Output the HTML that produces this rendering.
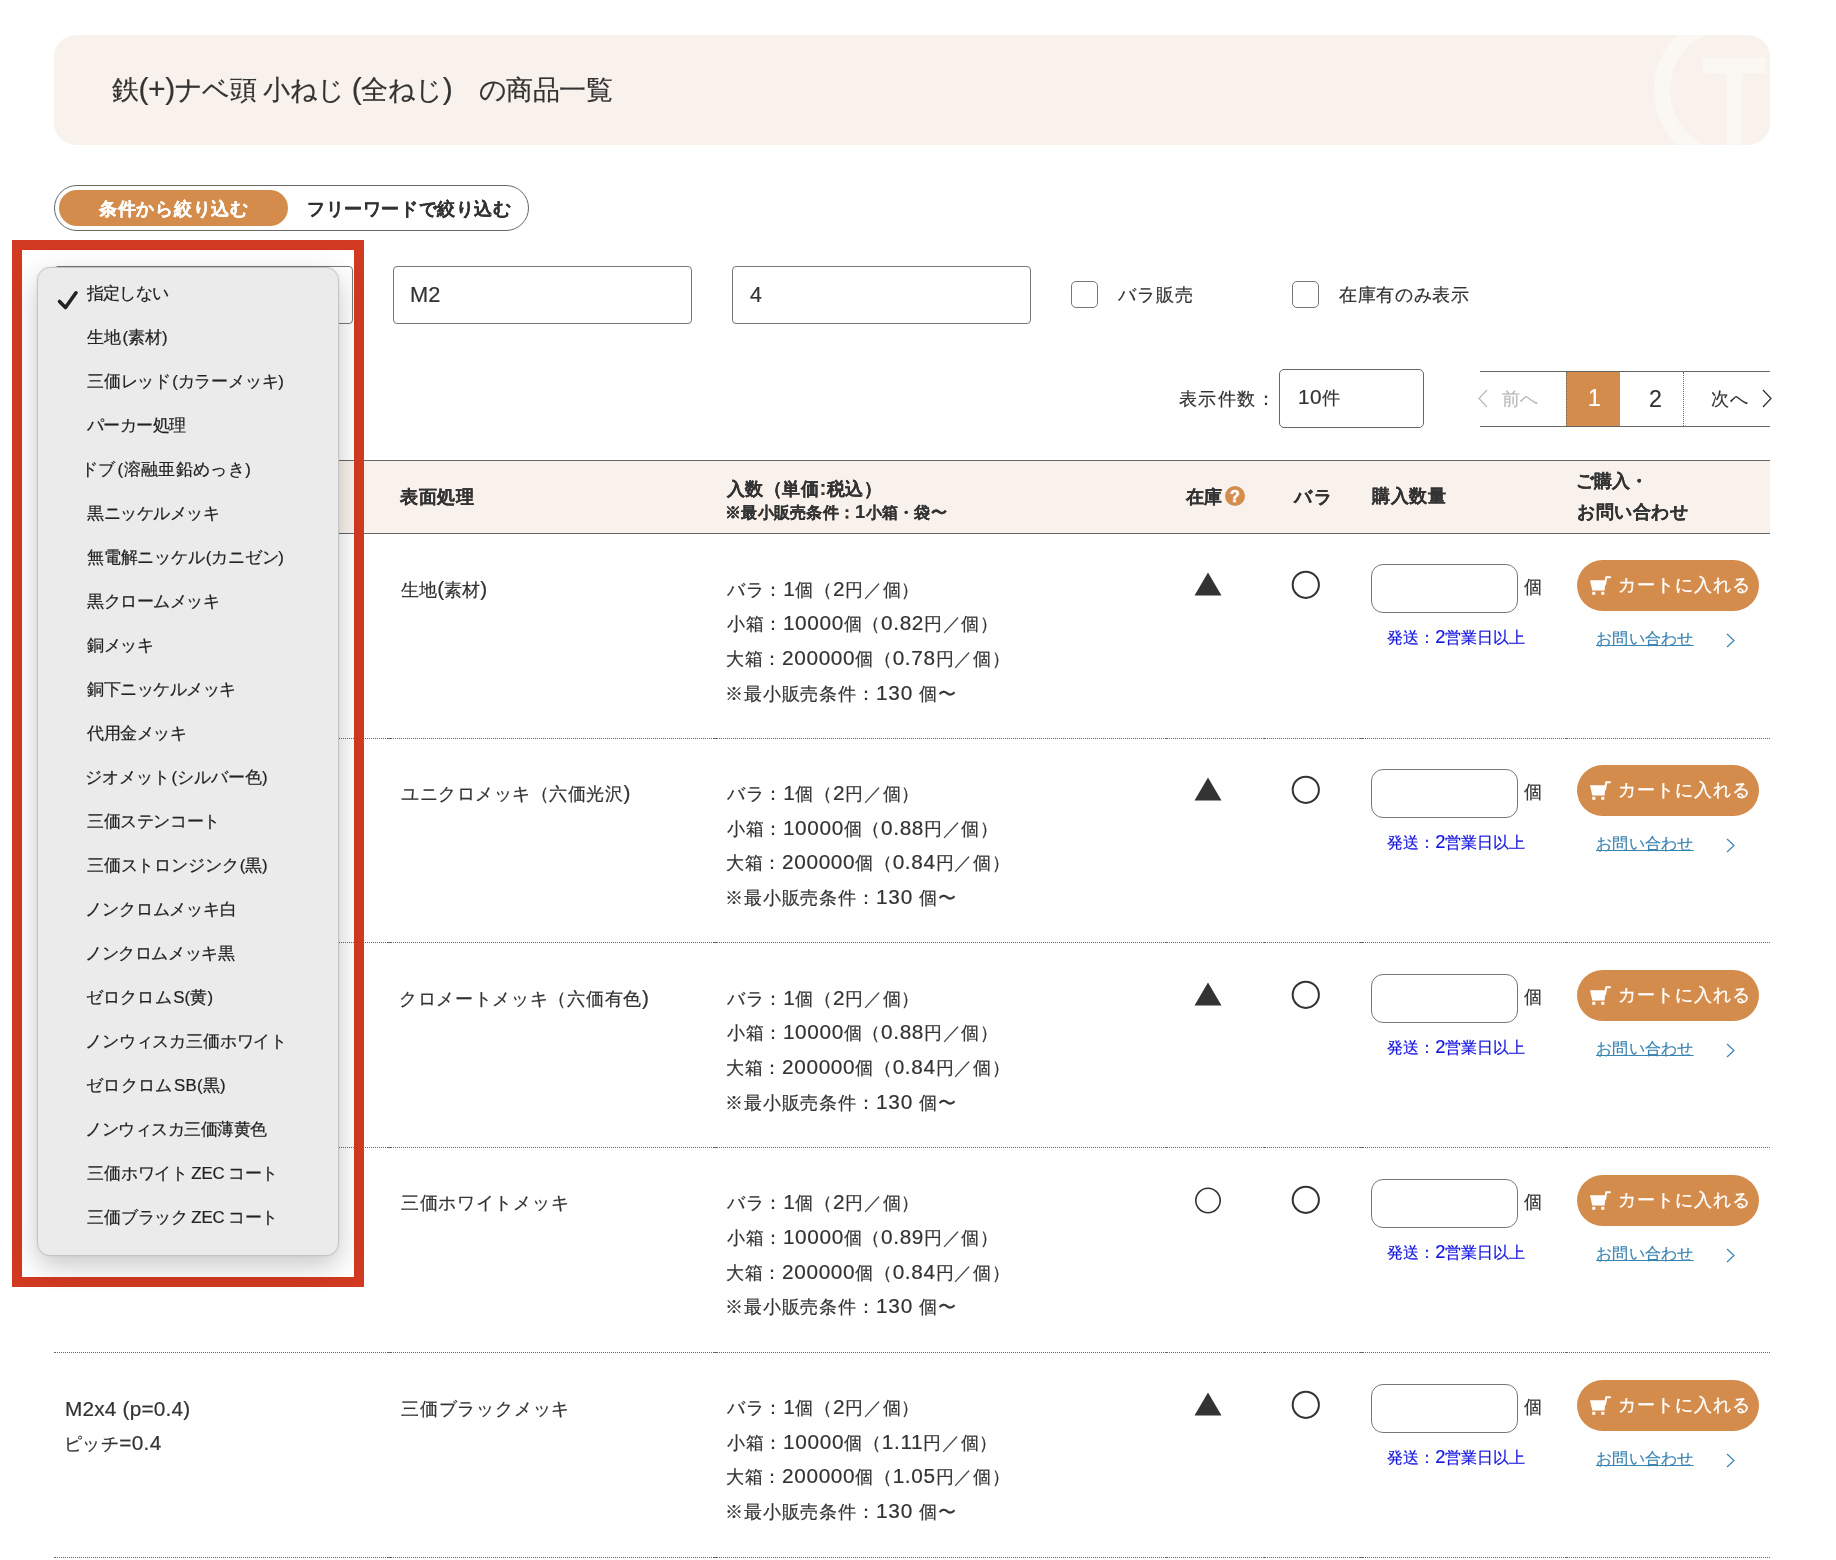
<!DOCTYPE html><html><head><meta charset="utf-8"><style>
html,body{margin:0;padding:0;background:#fff;}
body{width:1836px;height:1560px;overflow:hidden;position:relative;font-family:"Liberation Sans",sans-serif;color:#333;}
.t{position:absolute;white-space:nowrap;line-height:1;will-change:transform;}
.l{font-size:1.13em;line-height:0;}
.m{font-size:1.0em;line-height:0;}
.a{position:absolute;box-sizing:border-box;}
</style></head><body>
<div class="a" style="left:54px;top:35px;width:1716px;height:110px;background:#f9f2ec;border-radius:22px;overflow:hidden">
<svg width="1716" height="110" style="position:absolute;left:0;top:0"><g fill="none" stroke="#fbf7f3" stroke-width="16"><circle cx="1677.3" cy="55" r="69.3"/></g><rect x="1649" y="22.7" width="63" height="15.7" rx="3" fill="#fbf7f3"/><rect x="1673" y="30" width="15" height="90" fill="#fbf7f3"/></svg>
</div>
<div class="t" style="left:111.50px;top:76.80px;font-size:26.60px;-webkit-text-stroke:0.2px currentColor;letter-spacing:-0.477px;">鉄<span class="l">(+)</span>ナベ頭 小ねじ <span class="l">(</span>全ねじ<span class="l">)</span>　の商品一覧</div>
<div class="a" style="left:54px;top:185px;width:475px;height:46px;border:1px solid #666;border-radius:23px"></div>
<div class="a" style="left:59px;top:190px;width:229px;height:36px;background:#d48c4c;border-radius:18px"></div>
<div class="t" style="left:98.50px;top:199.70px;font-size:18.40px;font-weight:bold;-webkit-text-stroke:0.12px currentColor;color:#fff;letter-spacing:0.714px;">条件から絞り込む</div>
<div class="t" style="left:307.00px;top:199.70px;font-size:18.40px;font-weight:bold;-webkit-text-stroke:0.12px currentColor;letter-spacing:0.600px;">フリーワードで絞り込む</div>
<div class="a" style="left:54px;top:266px;width:299px;height:58px;border:1px solid #777;border-radius:4px"></div>
<div class="a" style="left:393px;top:266px;width:299px;height:58px;border:1px solid #777;border-radius:4px"></div>
<div class="a" style="left:732px;top:266px;width:299px;height:58px;border:1px solid #777;border-radius:4px"></div>
<div class="t" style="left:410.00px;top:285.70px;font-size:19.30px;-webkit-text-stroke:0.2px currentColor;"><span class="l">M2</span></div>
<div class="t" style="left:749.90px;top:286.50px;font-size:18.80px;-webkit-text-stroke:0.2px currentColor;"><span class="l">4</span></div>
<div class="a" style="left:1071px;top:281px;width:27px;height:27px;border:1px solid #777;border-radius:5px"></div>
<div class="t" style="left:1117.70px;top:286.30px;font-size:18.40px;-webkit-text-stroke:0.2px currentColor;letter-spacing:0.967px;">バラ販売</div>
<div class="a" style="left:1292px;top:281px;width:27px;height:27px;border:1px solid #777;border-radius:5px"></div>
<div class="t" style="left:1338.70px;top:286.30px;font-size:18.40px;-webkit-text-stroke:0.2px currentColor;letter-spacing:0.633px;">在庫有のみ表示</div>
<div class="t" style="left:1179.00px;top:389.80px;font-size:18.40px;-webkit-text-stroke:0.2px currentColor;letter-spacing:1.375px;">表示件数：</div>
<div class="a" style="left:1279px;top:369px;width:145px;height:59px;border:1px solid #666;border-radius:5px"></div>
<div class="t" style="left:1298.00px;top:389.40px;font-size:18.40px;-webkit-text-stroke:0.2px currentColor;letter-spacing:0.500px;"><span class="l">10</span>件</div>
<div class="a" style="left:1480px;top:371px;width:290px;height:56px;border-top:1px solid #666;border-bottom:1px solid #666"></div>
<div class="a" style="left:1566px;top:372px;width:54px;height:54px;background:#d48c4c;border-left:1px dotted #666"></div>
<div class="a" style="left:1683px;top:372px;width:1px;height:54px;border-left:1px dotted #666"></div>
<svg class="a" style="left:1476px;top:389px" width="14" height="20"><path d="M11 1 L3 9.5 L11 18" fill="none" stroke="#bbb" stroke-width="1.3"/></svg>
<div class="t" style="left:1502.40px;top:389.80px;font-size:18.40px;-webkit-text-stroke:0.2px currentColor;color:#bbb;letter-spacing:-0.500px;">前へ</div>
<div class="t" style="left:1588.10px;top:389.40px;font-size:20.50px;-webkit-text-stroke:0.2px currentColor;color:#fff;"><span class="l">1</span></div>
<div class="t" style="left:1649.40px;top:389.80px;font-size:20.50px;-webkit-text-stroke:0.2px currentColor;"><span class="l">2</span></div>
<div class="t" style="left:1710.50px;top:389.80px;font-size:18.40px;-webkit-text-stroke:0.2px currentColor;letter-spacing:0.500px;">次へ</div>
<svg class="a" style="left:1760px;top:389px" width="14" height="20"><path d="M3 1 L11 9.5 L3 18" fill="none" stroke="#333" stroke-width="1.3"/></svg>
<div class="a" style="left:54px;top:460px;width:1716px;height:74px;background:#f9f2ec;border-top:1px solid #666;border-bottom:1px solid #666"></div>
<div class="t" style="left:400.40px;top:488.10px;font-size:18.40px;font-weight:bold;-webkit-text-stroke:0.12px currentColor;letter-spacing:0.533px;">表面処理</div>
<div class="t" style="left:726.70px;top:480.00px;font-size:18.40px;font-weight:bold;-webkit-text-stroke:0.12px currentColor;letter-spacing:0.487px;">入数（単価<span class="l">:</span>税込）</div>
<div class="t" style="left:724.70px;top:504.40px;font-size:16.30px;font-weight:bold;-webkit-text-stroke:0.12px currentColor;letter-spacing:0.254px;">※最小販売条件：<span class="l">1</span>小箱・袋〜</div>
<div class="t" style="left:1185.70px;top:488.30px;font-size:18.40px;font-weight:bold;-webkit-text-stroke:0.12px currentColor;letter-spacing:0.100px;">在庫</div>
<div class="a" style="left:1225px;top:486px;width:20px;height:20px;border-radius:50%;background:#d48c4c;color:#fff;font-weight:bold;font-size:16px;line-height:21px;text-align:center;-webkit-text-stroke:0.5px #fff">?</div>
<div class="t" style="left:1294.00px;top:488.00px;font-size:18.40px;font-weight:bold;-webkit-text-stroke:0.12px currentColor;letter-spacing:1.500px;">バラ</div>
<div class="t" style="left:1371.70px;top:487.30px;font-size:18.40px;font-weight:bold;-webkit-text-stroke:0.12px currentColor;letter-spacing:0.667px;">購入数量</div>
<div class="t" style="left:1576.00px;top:472.30px;font-size:18.40px;font-weight:bold;-webkit-text-stroke:0.12px currentColor;">ご購入・</div>
<div class="t" style="left:1577.00px;top:503.10px;font-size:18.40px;font-weight:bold;-webkit-text-stroke:0.12px currentColor;letter-spacing:0.600px;">お問い合わせ</div>
<div class="a" style="left:54px;top:738px;width:1716px;height:1px;border-top:1px dotted #666"></div>
<div class="a" style="left:388px;top:738px;width:3px;height:1px;background:#666"></div>
<div class="a" style="left:714px;top:738px;width:3px;height:1px;background:#666"></div>
<div class="a" style="left:1165px;top:738px;width:3px;height:1px;background:#666"></div>
<div class="a" style="left:1263px;top:738px;width:3px;height:1px;background:#666"></div>
<div class="a" style="left:1360px;top:738px;width:3px;height:1px;background:#666"></div>
<div class="a" style="left:1565px;top:738px;width:3px;height:1px;background:#666"></div>
<div class="t" style="left:400.90px;top:580.90px;font-size:18.40px;-webkit-text-stroke:0.2px currentColor;letter-spacing:0.080px;">生地<span class="l">(</span>素材<span class="l">)</span></div>
<div class="t" style="left:726.80px;top:580.50px;font-size:18.40px;-webkit-text-stroke:0.2px currentColor;letter-spacing:0.720px;">バラ：<span class="l">1</span>個（<span class="l">2</span>円／個）</div>
<div class="t" style="left:726.80px;top:615.17px;font-size:18.40px;-webkit-text-stroke:0.2px currentColor;letter-spacing:0.629px;">小箱：<span class="l">10000</span>個（<span class="l">0.82</span>円／個）</div>
<div class="t" style="left:725.80px;top:649.84px;font-size:18.40px;-webkit-text-stroke:0.2px currentColor;letter-spacing:0.661px;">大箱：<span class="l">200000</span>個（<span class="l">0.78</span>円／個）</div>
<div class="t" style="left:724.80px;top:684.51px;font-size:18.40px;-webkit-text-stroke:0.2px currentColor;letter-spacing:0.862px;">※最小販売条件：<span class="l">130</span> 個〜</div>
<svg class="a" style="left:1194px;top:571.7px" width="28" height="25"><path d="M14 0.5 L27.5 23.5 L0.5 23.5 Z" fill="#333"/></svg>
<svg class="a" style="left:1291px;top:570.1px" width="30" height="30"><circle cx="14.8" cy="14.8" r="13.1" fill="none" stroke="#333" stroke-width="2"/></svg>
<div class="a" style="left:1371px;top:564.0px;width:147px;height:49px;border:1px solid #777;border-radius:12px"></div>
<div class="t" style="left:1523.70px;top:577.90px;font-size:18.40px;-webkit-text-stroke:0.2px currentColor;">個</div>
<div class="t" style="left:1387.00px;top:629.00px;font-size:16.20px;-webkit-text-stroke:0.2px currentColor;color:#1515e0;letter-spacing:0.037px;">発送：<span class="l">2</span>営業日以上</div>
<div class="a" style="left:1577px;top:560.2px;width:182px;height:51px;border-radius:26px;background:#d48c4c"></div>
<svg class="a" style="left:1588px;top:575.7px" width="24" height="20"><path d="M2 4.2 L17.6 4.2 L16.6 14.4 L4.3 14.4 Z" fill="#fff"/><path d="M16.9 9 L18.3 1.3 L22.8 1.3" fill="none" stroke="#fff" stroke-width="2"/><rect x="4.3" y="15.8" width="3" height="3" fill="#fff"/><rect x="13.3" y="15.8" width="3" height="3" fill="#fff"/></svg>
<div class="t" style="left:1617.90px;top:576.30px;font-size:18.40px;-webkit-text-stroke:0.2px currentColor;color:#fff;letter-spacing:0.933px;-webkit-text-stroke:0.3px #fff;">カートに入れる</div>
<div class="t" style="left:1596.40px;top:631.30px;font-size:16.00px;-webkit-text-stroke:0.2px currentColor;color:#3b84b2;letter-spacing:0.280px;text-decoration:underline;">お問い合わせ</div>
<svg class="a" style="left:1725px;top:633.0px" width="12" height="16"><path d="M2 1 L9 7.5 L2 14" fill="none" stroke="#3b84b2" stroke-width="1.2"/></svg>
<div class="a" style="left:54px;top:942px;width:1716px;height:1px;border-top:1px dotted #666"></div>
<div class="a" style="left:388px;top:942px;width:3px;height:1px;background:#666"></div>
<div class="a" style="left:714px;top:942px;width:3px;height:1px;background:#666"></div>
<div class="a" style="left:1165px;top:942px;width:3px;height:1px;background:#666"></div>
<div class="a" style="left:1263px;top:942px;width:3px;height:1px;background:#666"></div>
<div class="a" style="left:1360px;top:942px;width:3px;height:1px;background:#666"></div>
<div class="a" style="left:1565px;top:942px;width:3px;height:1px;background:#666"></div>
<div class="t" style="left:400.90px;top:784.80px;font-size:18.40px;-webkit-text-stroke:0.2px currentColor;letter-spacing:0.542px;">ユニクロメッキ（六価光沢<span class="l">)</span></div>
<div class="t" style="left:726.80px;top:785.12px;font-size:18.40px;-webkit-text-stroke:0.2px currentColor;letter-spacing:0.720px;">バラ：<span class="l">1</span>個（<span class="l">2</span>円／個）</div>
<div class="t" style="left:726.80px;top:819.79px;font-size:18.40px;-webkit-text-stroke:0.2px currentColor;letter-spacing:0.629px;">小箱：<span class="l">10000</span>個（<span class="l">0.88</span>円／個）</div>
<div class="t" style="left:725.80px;top:854.46px;font-size:18.40px;-webkit-text-stroke:0.2px currentColor;letter-spacing:0.661px;">大箱：<span class="l">200000</span>個（<span class="l">0.84</span>円／個）</div>
<div class="t" style="left:724.80px;top:889.13px;font-size:18.40px;-webkit-text-stroke:0.2px currentColor;letter-spacing:0.862px;">※最小販売条件：<span class="l">130</span> 個〜</div>
<svg class="a" style="left:1194px;top:776.7px" width="28" height="25"><path d="M14 0.5 L27.5 23.5 L0.5 23.5 Z" fill="#333"/></svg>
<svg class="a" style="left:1291px;top:775.1px" width="30" height="30"><circle cx="14.8" cy="14.8" r="13.1" fill="none" stroke="#333" stroke-width="2"/></svg>
<div class="a" style="left:1371px;top:769.0px;width:147px;height:49px;border:1px solid #777;border-radius:12px"></div>
<div class="t" style="left:1523.70px;top:782.90px;font-size:18.40px;-webkit-text-stroke:0.2px currentColor;">個</div>
<div class="t" style="left:1387.00px;top:834.00px;font-size:16.20px;-webkit-text-stroke:0.2px currentColor;color:#1515e0;letter-spacing:0.037px;">発送：<span class="l">2</span>営業日以上</div>
<div class="a" style="left:1577px;top:765.2px;width:182px;height:51px;border-radius:26px;background:#d48c4c"></div>
<svg class="a" style="left:1588px;top:780.7px" width="24" height="20"><path d="M2 4.2 L17.6 4.2 L16.6 14.4 L4.3 14.4 Z" fill="#fff"/><path d="M16.9 9 L18.3 1.3 L22.8 1.3" fill="none" stroke="#fff" stroke-width="2"/><rect x="4.3" y="15.8" width="3" height="3" fill="#fff"/><rect x="13.3" y="15.8" width="3" height="3" fill="#fff"/></svg>
<div class="t" style="left:1617.90px;top:781.30px;font-size:18.40px;-webkit-text-stroke:0.2px currentColor;color:#fff;letter-spacing:0.933px;-webkit-text-stroke:0.3px #fff;">カートに入れる</div>
<div class="t" style="left:1596.40px;top:836.30px;font-size:16.00px;-webkit-text-stroke:0.2px currentColor;color:#3b84b2;letter-spacing:0.280px;text-decoration:underline;">お問い合わせ</div>
<svg class="a" style="left:1725px;top:838.0px" width="12" height="16"><path d="M2 1 L9 7.5 L2 14" fill="none" stroke="#3b84b2" stroke-width="1.2"/></svg>
<div class="a" style="left:54px;top:1147px;width:1716px;height:1px;border-top:1px dotted #666"></div>
<div class="a" style="left:388px;top:1147px;width:3px;height:1px;background:#666"></div>
<div class="a" style="left:714px;top:1147px;width:3px;height:1px;background:#666"></div>
<div class="a" style="left:1165px;top:1147px;width:3px;height:1px;background:#666"></div>
<div class="a" style="left:1263px;top:1147px;width:3px;height:1px;background:#666"></div>
<div class="a" style="left:1360px;top:1147px;width:3px;height:1px;background:#666"></div>
<div class="a" style="left:1565px;top:1147px;width:3px;height:1px;background:#666"></div>
<div class="t" style="left:398.90px;top:989.80px;font-size:18.40px;-webkit-text-stroke:0.2px currentColor;letter-spacing:0.685px;">クロメートメッキ（六価有色<span class="l">)</span></div>
<div class="t" style="left:726.80px;top:989.74px;font-size:18.40px;-webkit-text-stroke:0.2px currentColor;letter-spacing:0.720px;">バラ：<span class="l">1</span>個（<span class="l">2</span>円／個）</div>
<div class="t" style="left:726.80px;top:1024.41px;font-size:18.40px;-webkit-text-stroke:0.2px currentColor;letter-spacing:0.629px;">小箱：<span class="l">10000</span>個（<span class="l">0.88</span>円／個）</div>
<div class="t" style="left:725.80px;top:1059.08px;font-size:18.40px;-webkit-text-stroke:0.2px currentColor;letter-spacing:0.661px;">大箱：<span class="l">200000</span>個（<span class="l">0.84</span>円／個）</div>
<div class="t" style="left:724.80px;top:1093.75px;font-size:18.40px;-webkit-text-stroke:0.2px currentColor;letter-spacing:0.862px;">※最小販売条件：<span class="l">130</span> 個〜</div>
<svg class="a" style="left:1194px;top:981.7px" width="28" height="25"><path d="M14 0.5 L27.5 23.5 L0.5 23.5 Z" fill="#333"/></svg>
<svg class="a" style="left:1291px;top:980.1px" width="30" height="30"><circle cx="14.8" cy="14.8" r="13.1" fill="none" stroke="#333" stroke-width="2"/></svg>
<div class="a" style="left:1371px;top:974.0px;width:147px;height:49px;border:1px solid #777;border-radius:12px"></div>
<div class="t" style="left:1523.70px;top:987.90px;font-size:18.40px;-webkit-text-stroke:0.2px currentColor;">個</div>
<div class="t" style="left:1387.00px;top:1039.00px;font-size:16.20px;-webkit-text-stroke:0.2px currentColor;color:#1515e0;letter-spacing:0.037px;">発送：<span class="l">2</span>営業日以上</div>
<div class="a" style="left:1577px;top:970.2px;width:182px;height:51px;border-radius:26px;background:#d48c4c"></div>
<svg class="a" style="left:1588px;top:985.7px" width="24" height="20"><path d="M2 4.2 L17.6 4.2 L16.6 14.4 L4.3 14.4 Z" fill="#fff"/><path d="M16.9 9 L18.3 1.3 L22.8 1.3" fill="none" stroke="#fff" stroke-width="2"/><rect x="4.3" y="15.8" width="3" height="3" fill="#fff"/><rect x="13.3" y="15.8" width="3" height="3" fill="#fff"/></svg>
<div class="t" style="left:1617.90px;top:986.30px;font-size:18.40px;-webkit-text-stroke:0.2px currentColor;color:#fff;letter-spacing:0.933px;-webkit-text-stroke:0.3px #fff;">カートに入れる</div>
<div class="t" style="left:1596.40px;top:1041.30px;font-size:16.00px;-webkit-text-stroke:0.2px currentColor;color:#3b84b2;letter-spacing:0.280px;text-decoration:underline;">お問い合わせ</div>
<svg class="a" style="left:1725px;top:1043.0px" width="12" height="16"><path d="M2 1 L9 7.5 L2 14" fill="none" stroke="#3b84b2" stroke-width="1.2"/></svg>
<div class="a" style="left:54px;top:1352px;width:1716px;height:1px;border-top:1px dotted #666"></div>
<div class="a" style="left:388px;top:1352px;width:3px;height:1px;background:#666"></div>
<div class="a" style="left:714px;top:1352px;width:3px;height:1px;background:#666"></div>
<div class="a" style="left:1165px;top:1352px;width:3px;height:1px;background:#666"></div>
<div class="a" style="left:1263px;top:1352px;width:3px;height:1px;background:#666"></div>
<div class="a" style="left:1360px;top:1352px;width:3px;height:1px;background:#666"></div>
<div class="a" style="left:1565px;top:1352px;width:3px;height:1px;background:#666"></div>
<div class="t" style="left:400.90px;top:1193.60px;font-size:18.40px;-webkit-text-stroke:0.2px currentColor;letter-spacing:0.700px;">三価ホワイトメッキ</div>
<div class="t" style="left:726.80px;top:1194.36px;font-size:18.40px;-webkit-text-stroke:0.2px currentColor;letter-spacing:0.720px;">バラ：<span class="l">1</span>個（<span class="l">2</span>円／個）</div>
<div class="t" style="left:726.80px;top:1229.03px;font-size:18.40px;-webkit-text-stroke:0.2px currentColor;letter-spacing:0.629px;">小箱：<span class="l">10000</span>個（<span class="l">0.89</span>円／個）</div>
<div class="t" style="left:725.80px;top:1263.70px;font-size:18.40px;-webkit-text-stroke:0.2px currentColor;letter-spacing:0.661px;">大箱：<span class="l">200000</span>個（<span class="l">0.84</span>円／個）</div>
<div class="t" style="left:724.80px;top:1298.37px;font-size:18.40px;-webkit-text-stroke:0.2px currentColor;letter-spacing:0.862px;">※最小販売条件：<span class="l">130</span> 個〜</div>
<svg class="a" style="left:1194px;top:1186.8px" width="28" height="28"><circle cx="14" cy="13.5" r="12.2" fill="none" stroke="#333" stroke-width="1.6"/></svg>
<svg class="a" style="left:1291px;top:1185.1px" width="30" height="30"><circle cx="14.8" cy="14.8" r="13.1" fill="none" stroke="#333" stroke-width="2"/></svg>
<div class="a" style="left:1371px;top:1179.0px;width:147px;height:49px;border:1px solid #777;border-radius:12px"></div>
<div class="t" style="left:1523.70px;top:1192.90px;font-size:18.40px;-webkit-text-stroke:0.2px currentColor;">個</div>
<div class="t" style="left:1387.00px;top:1244.00px;font-size:16.20px;-webkit-text-stroke:0.2px currentColor;color:#1515e0;letter-spacing:0.037px;">発送：<span class="l">2</span>営業日以上</div>
<div class="a" style="left:1577px;top:1175.2px;width:182px;height:51px;border-radius:26px;background:#d48c4c"></div>
<svg class="a" style="left:1588px;top:1190.7px" width="24" height="20"><path d="M2 4.2 L17.6 4.2 L16.6 14.4 L4.3 14.4 Z" fill="#fff"/><path d="M16.9 9 L18.3 1.3 L22.8 1.3" fill="none" stroke="#fff" stroke-width="2"/><rect x="4.3" y="15.8" width="3" height="3" fill="#fff"/><rect x="13.3" y="15.8" width="3" height="3" fill="#fff"/></svg>
<div class="t" style="left:1617.90px;top:1191.30px;font-size:18.40px;-webkit-text-stroke:0.2px currentColor;color:#fff;letter-spacing:0.933px;-webkit-text-stroke:0.3px #fff;">カートに入れる</div>
<div class="t" style="left:1596.40px;top:1246.30px;font-size:16.00px;-webkit-text-stroke:0.2px currentColor;color:#3b84b2;letter-spacing:0.280px;text-decoration:underline;">お問い合わせ</div>
<svg class="a" style="left:1725px;top:1248.0px" width="12" height="16"><path d="M2 1 L9 7.5 L2 14" fill="none" stroke="#3b84b2" stroke-width="1.2"/></svg>
<div class="a" style="left:54px;top:1557px;width:1716px;height:1px;border-top:1px dotted #666"></div>
<div class="a" style="left:388px;top:1557px;width:3px;height:1px;background:#666"></div>
<div class="a" style="left:714px;top:1557px;width:3px;height:1px;background:#666"></div>
<div class="a" style="left:1165px;top:1557px;width:3px;height:1px;background:#666"></div>
<div class="a" style="left:1263px;top:1557px;width:3px;height:1px;background:#666"></div>
<div class="a" style="left:1360px;top:1557px;width:3px;height:1px;background:#666"></div>
<div class="a" style="left:1565px;top:1557px;width:3px;height:1px;background:#666"></div>
<div class="t" style="left:65.00px;top:1400.80px;font-size:18.40px;-webkit-text-stroke:0.2px currentColor;letter-spacing:0.200px;"><span class="l">M2x4 (p=0.4)</span></div>
<div class="t" style="left:64.40px;top:1434.50px;font-size:18.40px;-webkit-text-stroke:0.2px currentColor;letter-spacing:0.383px;">ピッチ<span class="l">=0.4</span></div>
<div class="t" style="left:400.90px;top:1399.60px;font-size:18.40px;-webkit-text-stroke:0.2px currentColor;letter-spacing:0.800px;">三価ブラックメッキ</div>
<div class="t" style="left:726.80px;top:1398.98px;font-size:18.40px;-webkit-text-stroke:0.2px currentColor;letter-spacing:0.720px;">バラ：<span class="l">1</span>個（<span class="l">2</span>円／個）</div>
<div class="t" style="left:726.80px;top:1433.65px;font-size:18.40px;-webkit-text-stroke:0.2px currentColor;letter-spacing:0.688px;">小箱：<span class="l">10000</span>個（<span class="l">1.11</span>円／個）</div>
<div class="t" style="left:725.80px;top:1468.32px;font-size:18.40px;-webkit-text-stroke:0.2px currentColor;letter-spacing:0.661px;">大箱：<span class="l">200000</span>個（<span class="l">1.05</span>円／個）</div>
<div class="t" style="left:724.80px;top:1502.99px;font-size:18.40px;-webkit-text-stroke:0.2px currentColor;letter-spacing:0.862px;">※最小販売条件：<span class="l">130</span> 個〜</div>
<svg class="a" style="left:1194px;top:1391.7px" width="28" height="25"><path d="M14 0.5 L27.5 23.5 L0.5 23.5 Z" fill="#333"/></svg>
<svg class="a" style="left:1291px;top:1390.1px" width="30" height="30"><circle cx="14.8" cy="14.8" r="13.1" fill="none" stroke="#333" stroke-width="2"/></svg>
<div class="a" style="left:1371px;top:1384.0px;width:147px;height:49px;border:1px solid #777;border-radius:12px"></div>
<div class="t" style="left:1523.70px;top:1397.90px;font-size:18.40px;-webkit-text-stroke:0.2px currentColor;">個</div>
<div class="t" style="left:1387.00px;top:1449.00px;font-size:16.20px;-webkit-text-stroke:0.2px currentColor;color:#1515e0;letter-spacing:0.037px;">発送：<span class="l">2</span>営業日以上</div>
<div class="a" style="left:1577px;top:1380.2px;width:182px;height:51px;border-radius:26px;background:#d48c4c"></div>
<svg class="a" style="left:1588px;top:1395.7px" width="24" height="20"><path d="M2 4.2 L17.6 4.2 L16.6 14.4 L4.3 14.4 Z" fill="#fff"/><path d="M16.9 9 L18.3 1.3 L22.8 1.3" fill="none" stroke="#fff" stroke-width="2"/><rect x="4.3" y="15.8" width="3" height="3" fill="#fff"/><rect x="13.3" y="15.8" width="3" height="3" fill="#fff"/></svg>
<div class="t" style="left:1617.90px;top:1396.30px;font-size:18.40px;-webkit-text-stroke:0.2px currentColor;color:#fff;letter-spacing:0.933px;-webkit-text-stroke:0.3px #fff;">カートに入れる</div>
<div class="t" style="left:1596.40px;top:1451.30px;font-size:16.00px;-webkit-text-stroke:0.2px currentColor;color:#3b84b2;letter-spacing:0.280px;text-decoration:underline;">お問い合わせ</div>
<svg class="a" style="left:1725px;top:1453.0px" width="12" height="16"><path d="M2 1 L9 7.5 L2 14" fill="none" stroke="#3b84b2" stroke-width="1.2"/></svg>
<div class="a" style="left:12px;top:240px;width:352px;height:1047px;border:10px solid #d13a20;"></div>
<div class="a" style="left:22px;top:250px;width:332px;height:1027px;background:rgba(255,255,255,0.0)"></div>
<div class="a" style="left:37px;top:267px;width:302px;height:989px;background:#ebebeb;border:1px solid #c4c4c4;border-radius:13px;box-shadow:0 10px 28px rgba(0,0,0,0.22), 0 0 3px rgba(0,0,0,0.06)"></div>
<div class="t" style="left:86.90px;top:285.80px;font-size:16.80px;-webkit-text-stroke:0.2px currentColor;color:#222;letter-spacing:-0.775px;">指定しない</div>
<div class="t" style="left:86.90px;top:329.80px;font-size:16.80px;-webkit-text-stroke:0.2px currentColor;color:#222;">生地<span class="m">&#8202;(</span>素材<span class="m">)</span></div>
<div class="t" style="left:86.90px;top:373.80px;font-size:16.80px;-webkit-text-stroke:0.2px currentColor;color:#222;letter-spacing:-0.208px;">三価レッド<span class="m">&#8202;(</span>カラーメッキ<span class="m">)</span></div>
<div class="t" style="left:86.90px;top:417.80px;font-size:16.80px;-webkit-text-stroke:0.2px currentColor;color:#222;letter-spacing:-0.620px;">パーカー処理</div>
<div class="t" style="left:80.90px;top:461.80px;font-size:16.80px;-webkit-text-stroke:0.2px currentColor;color:#222;letter-spacing:0.373px;">ドブ<span class="m">&#8202;(</span>溶融亜鉛めっき<span class="m">)</span></div>
<div class="t" style="left:86.90px;top:505.80px;font-size:16.80px;-webkit-text-stroke:0.2px currentColor;color:#222;letter-spacing:-0.457px;">黒ニッケルメッキ</div>
<div class="t" style="left:86.90px;top:549.80px;font-size:16.80px;-webkit-text-stroke:0.2px currentColor;color:#222;letter-spacing:-0.208px;">無電解ニッケル<span class="m">&#8202;(</span>カニゼン<span class="m">)</span></div>
<div class="t" style="left:86.90px;top:593.80px;font-size:16.80px;-webkit-text-stroke:0.2px currentColor;color:#222;letter-spacing:-0.457px;">黒クロームメッキ</div>
<div class="t" style="left:86.90px;top:637.80px;font-size:16.80px;-webkit-text-stroke:0.2px currentColor;color:#222;letter-spacing:-0.467px;">銅メッキ</div>
<div class="t" style="left:86.90px;top:681.80px;font-size:16.80px;-webkit-text-stroke:0.2px currentColor;color:#222;letter-spacing:-0.488px;">銅下ニッケルメッキ</div>
<div class="t" style="left:86.90px;top:725.80px;font-size:16.80px;-webkit-text-stroke:0.2px currentColor;color:#222;letter-spacing:-0.480px;">代用金メッキ</div>
<div class="t" style="left:84.90px;top:769.80px;font-size:16.80px;-webkit-text-stroke:0.2px currentColor;color:#222;">ジオメット<span class="m">&#8202;(</span>シルバー色<span class="m">)</span></div>
<div class="t" style="left:86.90px;top:813.80px;font-size:16.80px;-webkit-text-stroke:0.2px currentColor;color:#222;letter-spacing:-0.386px;">三価ステンコート</div>
<div class="t" style="left:86.90px;top:857.80px;font-size:16.80px;-webkit-text-stroke:0.2px currentColor;color:#222;letter-spacing:-0.167px;">三価ストロンジンク<span class="m">&#8202;(</span>黒<span class="m">)</span></div>
<div class="t" style="left:84.90px;top:901.80px;font-size:16.80px;-webkit-text-stroke:0.2px currentColor;color:#222;letter-spacing:-0.113px;">ノンクロムメッキ白</div>
<div class="t" style="left:84.90px;top:945.80px;font-size:16.80px;-webkit-text-stroke:0.2px currentColor;color:#222;letter-spacing:-0.413px;">ノンクロムメッキ黒</div>
<div class="t" style="left:85.90px;top:989.80px;font-size:16.80px;-webkit-text-stroke:0.2px currentColor;color:#222;letter-spacing:0.144px;">ゼロクロム<span class="m">&#8202;S(</span>黄<span class="m">)</span></div>
<div class="t" style="left:84.90px;top:1033.80px;font-size:16.80px;-webkit-text-stroke:0.2px currentColor;color:#222;letter-spacing:-0.155px;">ノンウィスカ三価ホワイト</div>
<div class="t" style="left:85.90px;top:1077.80px;font-size:16.80px;-webkit-text-stroke:0.2px currentColor;color:#222;letter-spacing:0.260px;">ゼロクロム<span class="m">&#8202;SB(</span>黒<span class="m">)</span></div>
<div class="t" style="left:84.90px;top:1121.80px;font-size:16.80px;-webkit-text-stroke:0.2px currentColor;color:#222;letter-spacing:-0.500px;">ノンウィスカ三価薄黄色</div>
<div class="t" style="left:86.90px;top:1165.80px;font-size:16.80px;-webkit-text-stroke:0.2px currentColor;color:#222;letter-spacing:-0.146px;">三価ホワイト<span class="m">&#8201;ZEC&#8201;</span>コート</div>
<div class="t" style="left:86.90px;top:1209.80px;font-size:16.80px;-webkit-text-stroke:0.2px currentColor;color:#222;letter-spacing:-0.146px;">三価ブラック<span class="m">&#8201;ZEC&#8201;</span>コート</div>
<svg class="a" style="left:56px;top:290px" width="24" height="22"><path d="M3.5 11.5 L9.5 17.5 L20 2.8" fill="none" stroke="#222" stroke-width="3.6" stroke-linecap="round" stroke-linejoin="round"/></svg>
</body></html>
